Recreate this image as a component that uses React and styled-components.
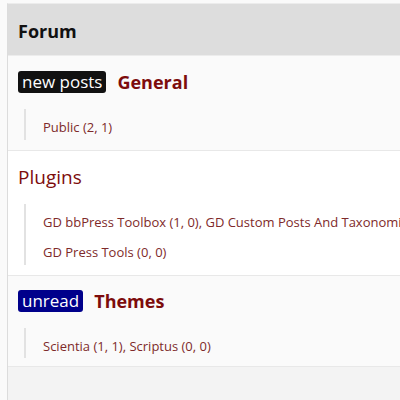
import React from "react";
import styled, { createGlobalStyle } from "styled-components";

const Global = createGlobalStyle`
  html, body { margin: 0; padding: 0; background: #fafafa; }
  body { font-family: "Open Sans", "Noto Sans", sans-serif; }
  #root { min-height: 400px; }
`;

const Wrap = styled.div`
  margin: 3px 0 0 7px;
  border-left: 1px solid #dcdcdc;
  border-top: 1px solid #ececec;
  background: #f3f3f3;
  min-height: 396px;
`;

const Header = styled.div`
  height: 52px;
  background: #dddddd;
  border-bottom: 1px solid #ececec;
  display: flex;
  align-items: center;
  padding: 2px 0 0 10px;
  box-sizing: border-box;
  font-size: 18px;
  font-weight: 700;
  color: #111;
`;

const Row = styled.div`
  background: ${(p) => (p.$alt ? "#fafafa" : "#ffffff")};
  border-bottom: 1px solid #e8e8e8;
  padding: ${(p) => p.$pad || "15px 0 10px 10px"};
`;

const Title = styled.div`
  display: flex;
  align-items: center;
  gap: 11px;
  height: 22px;
`;

const Badge = styled.span`
  background: ${(p) => p.$bg};
  color: #fff;
  font-size: 17px;
  line-height: 22px;
  height: 22px;
  padding: 0 4px;
  border-radius: 3px;
`;

const Name = styled.a`
  color: #7d0c0c;
  font-size: ${(p) => (p.$bold ? "18px" : "19px")};
  font-weight: ${(p) => (p.$bold ? 700 : 400)};
  text-decoration: none;
`;

const Sub = styled.div`
  margin: 16px 0 0 6px;
  border-left: 2px solid #e2e2e2;
  padding-left: 17px;
`;

const Item = styled.div`
  box-sizing: border-box;
  font-size: 13px;
  line-height: 26px;
  padding-top: 5px;
  height: 30.5px;
  color: #7e2a2a;
  white-space: nowrap;
  overflow: hidden;
`;

export default function App() {
  return (
    <>
      <Global />
      <Wrap>
        <Header>Forum</Header>
        <Row $alt>
          <Title>
            <Badge $bg="#111">new posts</Badge>
            <Name $bold>General</Name>
          </Title>
          <Sub>
            <Item>Public (2, 1)</Item>
          </Sub>
        </Row>
        <Row $pad="15px 0 10px 10px">
          <Title>
            <Name>Plugins</Name>
          </Title>
          <Sub>
            <Item>GD bbPress Toolbox (1, 0), GD Custom Posts And Taxonomies Tools (0, 0)</Item>
            <Item>GD Press Tools (0, 0)</Item>
          </Sub>
        </Row>
        <Row $alt $pad="14px 0 8px 10px">
          <Title>
            <Badge $bg="#00008b">unread</Badge>
            <Name $bold>Themes</Name>
          </Title>
          <Sub>
            <Item>Scientia (1, 1), Scriptus (0, 0)</Item>
          </Sub>
        </Row>
      </Wrap>
    </>
  );
}
